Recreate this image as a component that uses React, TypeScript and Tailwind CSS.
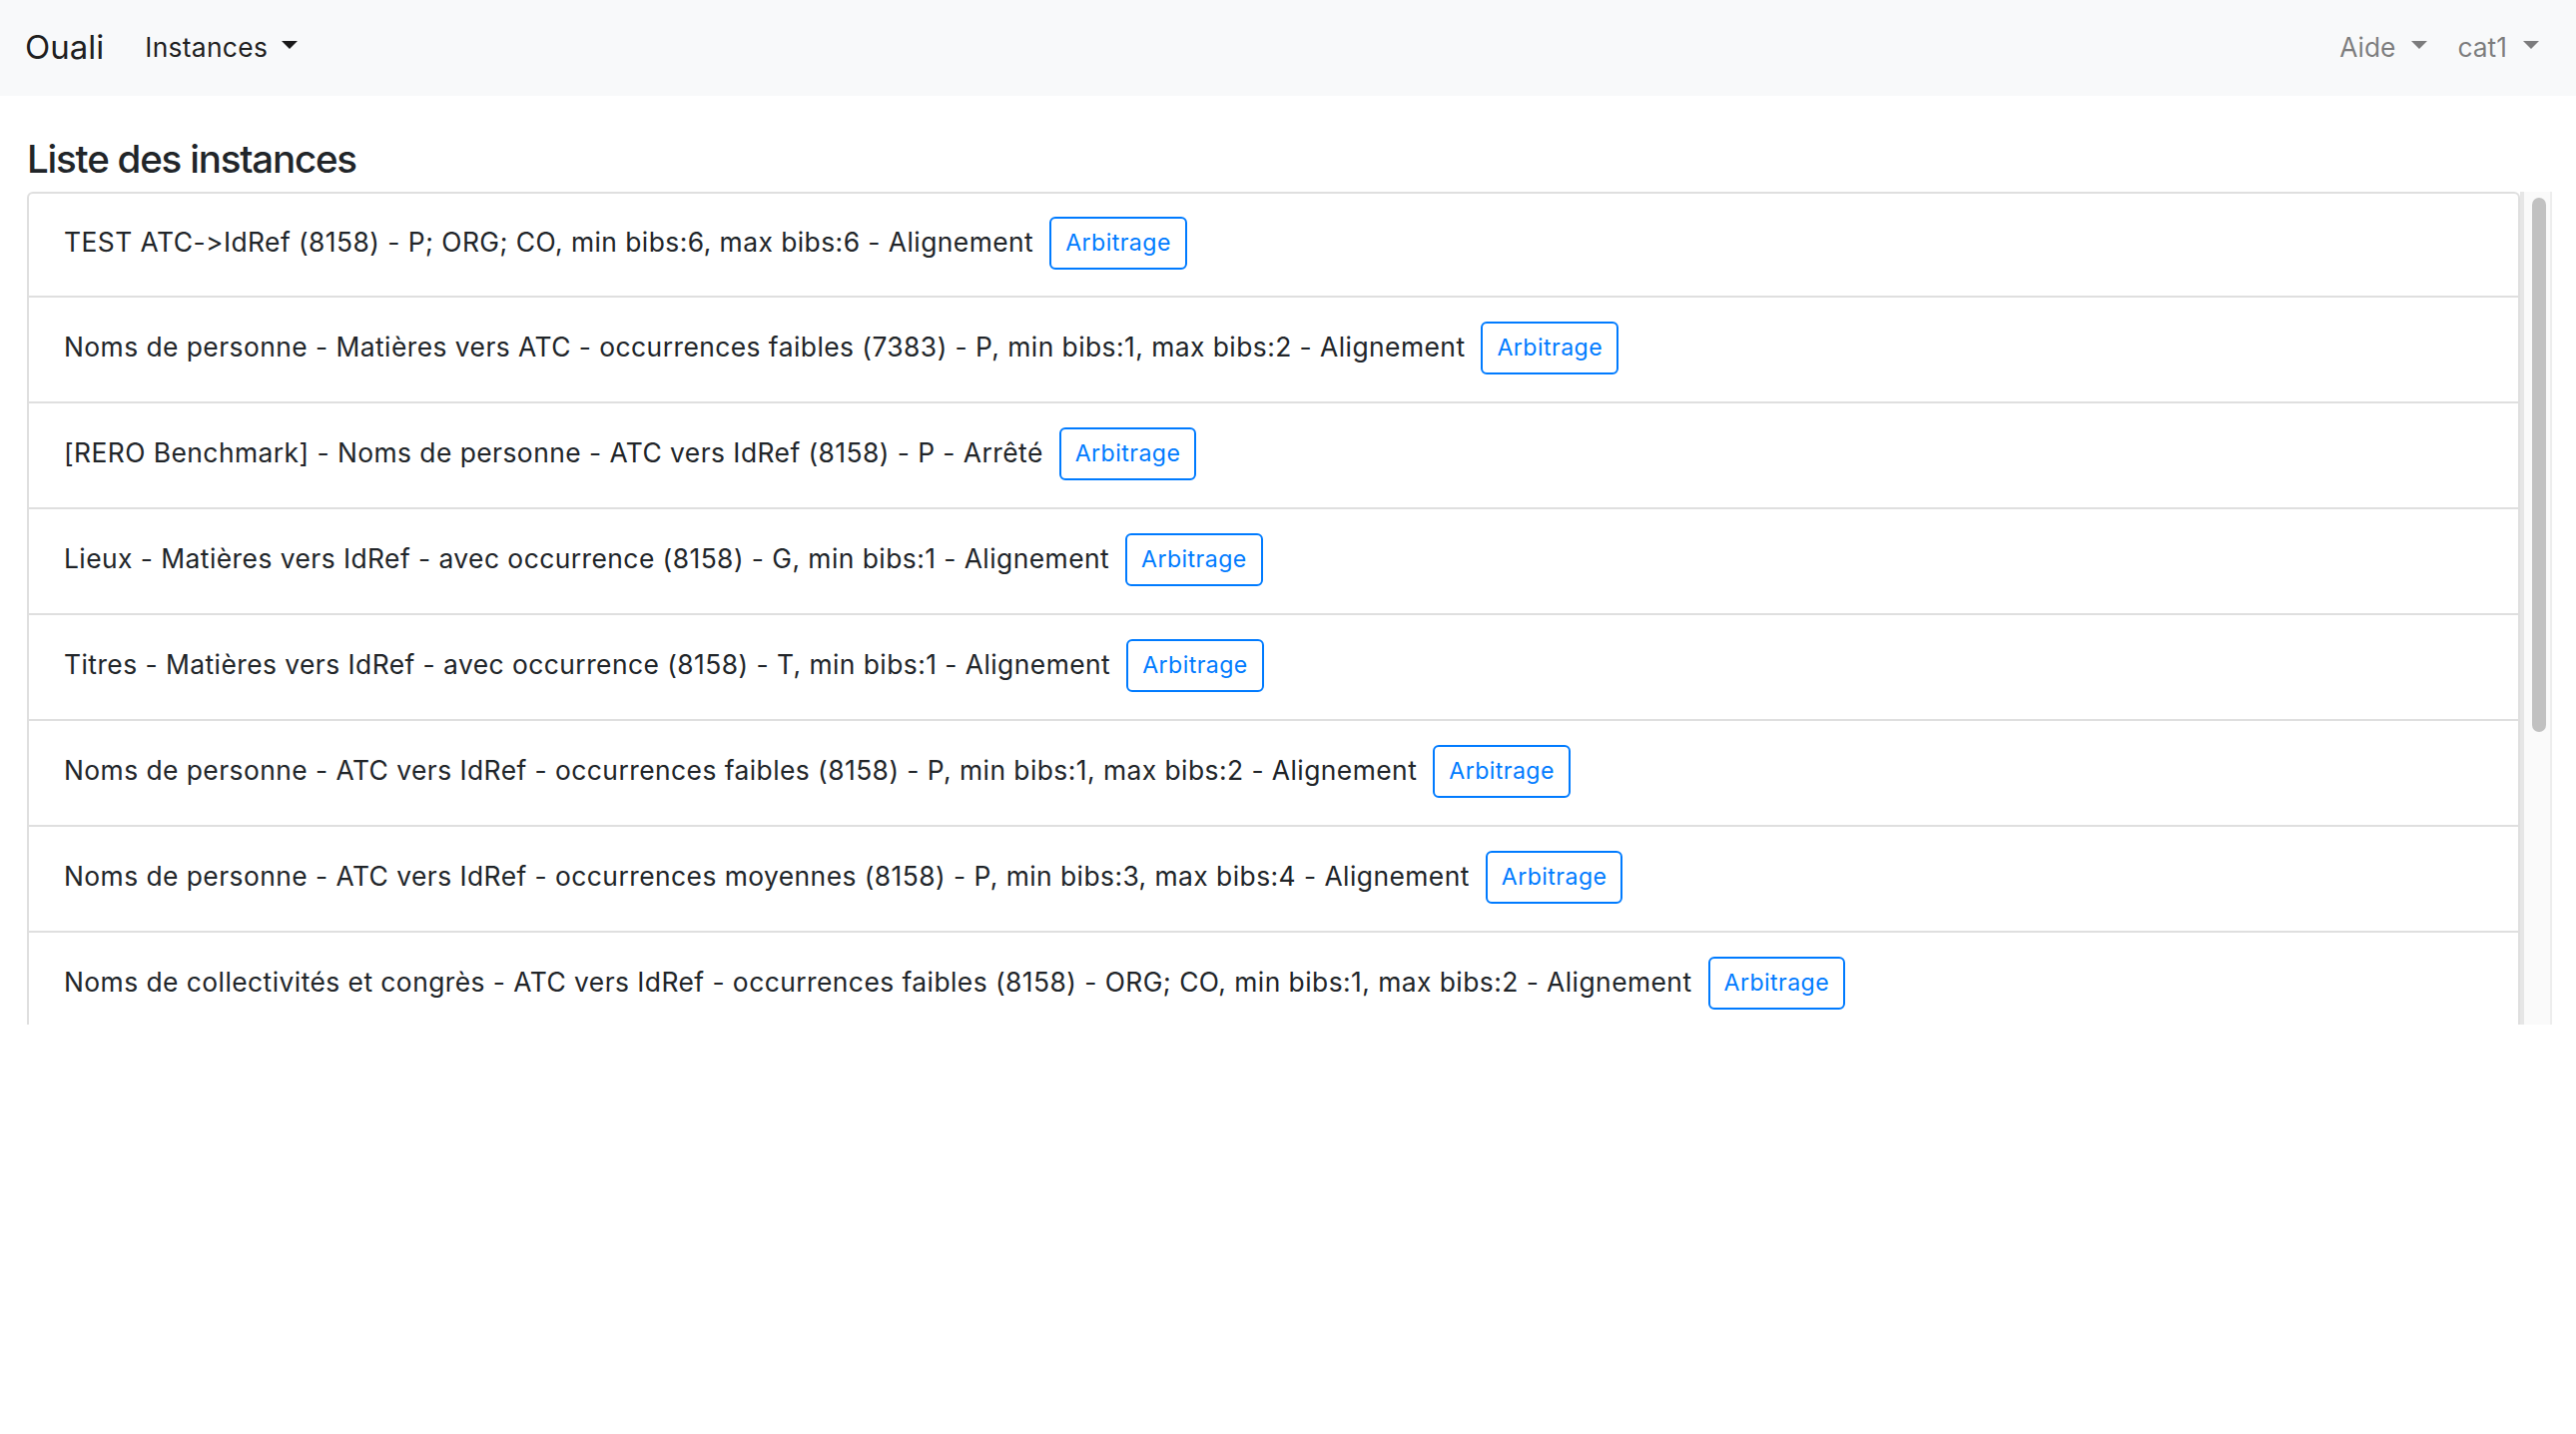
import React from "react";

const instances = [
  "TEST ATC->IdRef (8158) - P; ORG; CO, min bibs:6, max bibs:6 - Alignement",
  "Noms de personne - Matières vers ATC - occurrences faibles (7383) - P, min bibs:1, max bibs:2 - Alignement",
  "[RERO Benchmark] - Noms de personne - ATC vers IdRef (8158) - P - Arrêté",
  "Lieux - Matières vers IdRef - avec occurrence (8158) - G, min bibs:1 - Alignement",
  "Titres - Matières vers IdRef - avec occurrence (8158) - T, min bibs:1 - Alignement",
  "Noms de personne - ATC vers IdRef - occurrences faibles (8158) - P, min bibs:1, max bibs:2 - Alignement",
  "Noms de personne - ATC vers IdRef - occurrences moyennes (8158) - P, min bibs:3, max bibs:4 - Alignement",
  "Noms de collectivités et congrès - ATC vers IdRef - occurrences faibles (8158) - ORG; CO, min bibs:1, max bibs:2 - Alignement",
  "Noms de collectivités et congrès - ATC vers IdRef - occurrences moyennes (8158) - ORG; CO, min bibs:3, max bibs:4 - Alignement",
  "Noms de personne - ATC vers IdRef - occurrences fortes (8158) - P, min bibs:5 - Alignement",
  "Titres - ATC vers IdRef - occurrences faibles (8158) - T, min bibs:1, max bibs:2 - Alignement",
  "Lieux - ATC vers IdRef - occurrences faibles (8158) - G, min bibs:1, max bibs:2 - Alignement",
];

function Caret({ className = "" }: { className?: string }) {
  return (
    <span
      className={`inline-block h-0 w-0 border-x-[8px] border-t-[8px] border-b-0 border-x-transparent border-t-current ${className}`}
    />
  );
}

export default function App() {
  return (
    <div className="min-h-screen bg-white font-['Inter','Liberation_Sans',sans-serif] text-[#212529] [font-feature-settings:'calt'_0]">
      {/* Navbar */}
      <nav className="flex h-[96px] items-center justify-between bg-[#f8f9fa] pl-[25px] pr-[37px]">
        <div className="flex items-center">
          <a href="#" className="text-[33px] leading-[1.5] text-black/90">
            Ouali
          </a>
          <button className="ml-[41px] flex items-center text-[26.4px] leading-[1.5] tracking-[0.3px] text-black/90">
            Instances
            <Caret className="mb-[6px] ml-[14px]" />
          </button>
        </div>
        <div className="flex items-center gap-[30px]">
          <button className="flex items-center text-[26.4px] leading-[1.5] text-black/50">
            Aide
            <Caret className="mb-[6px] ml-[16px]" />
          </button>
          <button className="flex items-center text-[26.4px] leading-[1.5] text-black/50">
            cat1
            <Caret className="mb-[6px] ml-[16px]" />
          </button>
        </div>
      </nav>

      {/* Liste */}
      <main className="pl-[27px] pr-[24px]">
        <h4 className="mt-[40px] mb-[10px] text-[38.5px] font-medium leading-[1.2] tracking-[-1.2px]">
          Liste des instances
        </h4>
        <div className="flex h-[834px]">
          <div className="flex-1 overflow-hidden">
            <ul className="rounded-[6px] border-2 border-[#dfdfdf]">
              {instances.map((name, i) => (
                <li
                  key={i}
                  className={`flex items-center pl-[35px] pb-[4px] text-[26.4px] leading-[1.5] tracking-[0.45px] ${
                    i === 0 ? "h-[104px]" : "h-[106px]"
                  } ${i < instances.length - 1 ? "border-b-2 border-[#dfdfdf]" : ""}`}
                >
                  <span>{name}</span>
                  <button className="ml-[16px] flex h-[53px] items-center rounded-[6px] border-2 border-[#007bff] px-[14px] text-[23.1px] leading-[1.5] tracking-[0.45px] text-[#007bff]">
                    Arbitrage
                  </button>
                </li>
              ))}
            </ul>
          </div>
          {/* scrollbar */}
          <div className="w-[32px] border-l-[4px] border-r-[2px] border-l-[#e6e6e6] border-r-[#ededed] bg-[#fafafa]">
            <div className="ml-[8px] mt-[6px] h-[535px] w-[14px] rounded-full bg-[#c1c1c1]" />
          </div>
        </div>
      </main>
    </div>
  );
}
